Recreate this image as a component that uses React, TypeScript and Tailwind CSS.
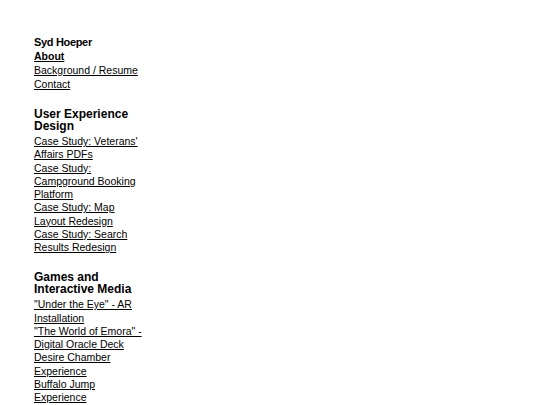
// Sidebar navigation for a portfolio site
type Section = {
  title: string;
  links: string[];
};

const sections: Section[] = [
  {
    title: "User Experience Design",
    links: [
      "Case Study: Veterans' Affairs PDFs",
      "Case Study: Campground Booking Platform",
      "Case Study: Map Layout Redesign",
      "Case Study: Search Results Redesign",
    ],
  },
  {
    title: "Games and Interactive Media",
    links: [
      '"Under the Eye" - AR Installation',
      '"The World of Emora" - Digital Oracle Deck',
      "Desire Chamber Experience",
      "Buffalo Jump Experience",
    ],
  },
];

function NavSection({ section }: { section: Section }) {
  return (
    <div className="mt-[17px]">
      <h2 className="text-[12px] leading-[12px] font-bold">{section.title}</h2>
      <ul className="mt-[3px]">
        {section.links.map((link) => (
          <li key={link} className="text-[10.5px] leading-[13.25px]">
            <a href="#" className="underline">
              {link}
            </a>
          </li>
        ))}
      </ul>
    </div>
  );
}

export default function App() {
  return (
    <div className="min-h-screen bg-white text-black font-['Liberation_Sans',Arial,sans-serif]">
      <nav className="w-[112px] ml-[34px] pt-[35px] pb-4">
        <div className="text-[11px] leading-[14px] font-bold tracking-[-0.03em]">
          Syd Hoeper
        </div>
        <ul>
          <li className="text-[10.5px] leading-[14px] font-bold">
            <a href="#" className="underline">
              About
            </a>
          </li>
          <li className="text-[10.5px] leading-[14px]">
            <a href="#" className="underline">
              Background / Resume
            </a>
          </li>
          <li className="text-[10.5px] leading-[14px]">
            <a href="#" className="underline">
              Contact
            </a>
          </li>
        </ul>
        {sections.map((section) => (
          <NavSection key={section.title} section={section} />
        ))}
      </nav>
    </div>
  );
}
